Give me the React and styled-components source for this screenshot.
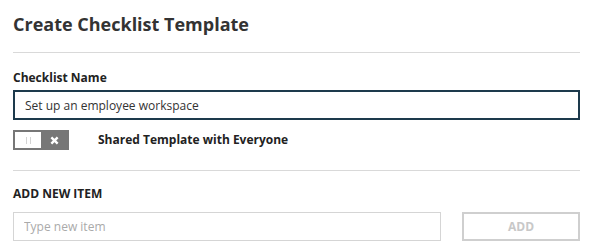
import React from "react";
import styled, { createGlobalStyle } from "styled-components";

const Global = createGlobalStyle`
  html, body { margin: 0; padding: 0; background: #fff; }
  body { font-family: "Open Sans", "Liberation Sans", sans-serif; color: #333; }
  * { box-sizing: border-box; }
`;

const Page = styled.div`
  width: 593px;
  padding: 0 13px;
`;

const Title = styled.h1`
  margin: 0;
  padding-top: 12px;
  height: 52px;
  font-size: 18px;
  font-weight: 700;
  line-height: 24px;
  color: #333;
`;

const Divider = styled.div`
  height: 1px;
  background: #d9d9d9;
`;

const Section = styled.div`
  display: flex;
  flex-direction: column;
  padding-top: ${(p) => p.$top}px;
  padding-bottom: ${(p) => p.$bottom}px;
`;

const Label = styled.label`
  font-size: 12px;
  font-weight: 700;
  line-height: 16px;
  color: #222;
  text-transform: ${(p) => (p.$upper ? "uppercase" : "none")};
`;

const TextInput = styled.input`
  height: ${(p) => p.$h}px;
  width: 100%;
  padding: 0 10px;
  font-family: "Open Sans", "Liberation Sans", sans-serif;
  font-size: 12px;
  color: #333;
  border: ${(p) => (p.$dark ? "2px solid #1d3a4c" : "1px solid #d5d5d5")};
  outline: none;
  background: #fff;
  &::placeholder { color: #aaa; }
`;

const ToggleRow = styled.div`
  display: flex;
  align-items: center;
  gap: 29px;
  margin-top: 10px;
`;

const Toggle = styled.div`
  display: flex;
  align-items: center;
  width: 56px;
  height: 20px;
  padding: 2px;
  background: #777;
`;

const Knob = styled.div`
  width: 26px;
  height: 16px;
  background: #fff;
  display: flex;
  align-items: center;
  justify-content: center;
  gap: 3px;
`;

const Tick = styled.span`
  width: 1px;
  height: 7px;
  background: #d4d4d4;
`;

const XMark = styled.div`
  flex: 1;
  display: flex;
  align-items: center;
  justify-content: center;
`;

const AddRow = styled.div`
  display: flex;
  gap: 21px;
  margin-top: 10px;
`;

const AddButton = styled.button`
  width: 118px;
  height: 29px;
  flex-shrink: 0;
  border: 2px solid #cfcfcf;
  background: #fff;
  color: #c8c8c8;
  font-family: "Open Sans", "Liberation Sans", sans-serif;
  font-size: 12px;
  font-weight: 700;
`;

export default function App() {
  return (
    <>
      <Global />
      <Page>
        <Title>Create Checklist Template</Title>
        <Divider />
        <Section $top={17} $bottom={20}>
          <Label>Checklist Name</Label>
          <TextInput $dark $h={30} defaultValue="Set up an employee workspace" style={{ marginTop: 4 }} />
          <ToggleRow>
            <Toggle>
              <Knob>
                <Tick />
                <Tick />
              </Knob>
              <XMark>
                <svg width="9" height="9" viewBox="0 0 10 10">
                  <path d="M1.5 1.5 L8.5 8.5 M8.5 1.5 L1.5 8.5" stroke="#fff" strokeWidth="2.6" strokeLinecap="butt" />
                </svg>
              </XMark>
            </Toggle>
            <Label>Shared Template with Everyone</Label>
          </ToggleRow>
        </Section>
        <Divider />
        <Section $top={15} $bottom={0}>
          <Label $upper>Add new item</Label>
          <AddRow>
            <TextInput $h={29} placeholder="Type new item" />
            <AddButton>ADD</AddButton>
          </AddRow>
        </Section>
      </Page>
    </>
  );
}
